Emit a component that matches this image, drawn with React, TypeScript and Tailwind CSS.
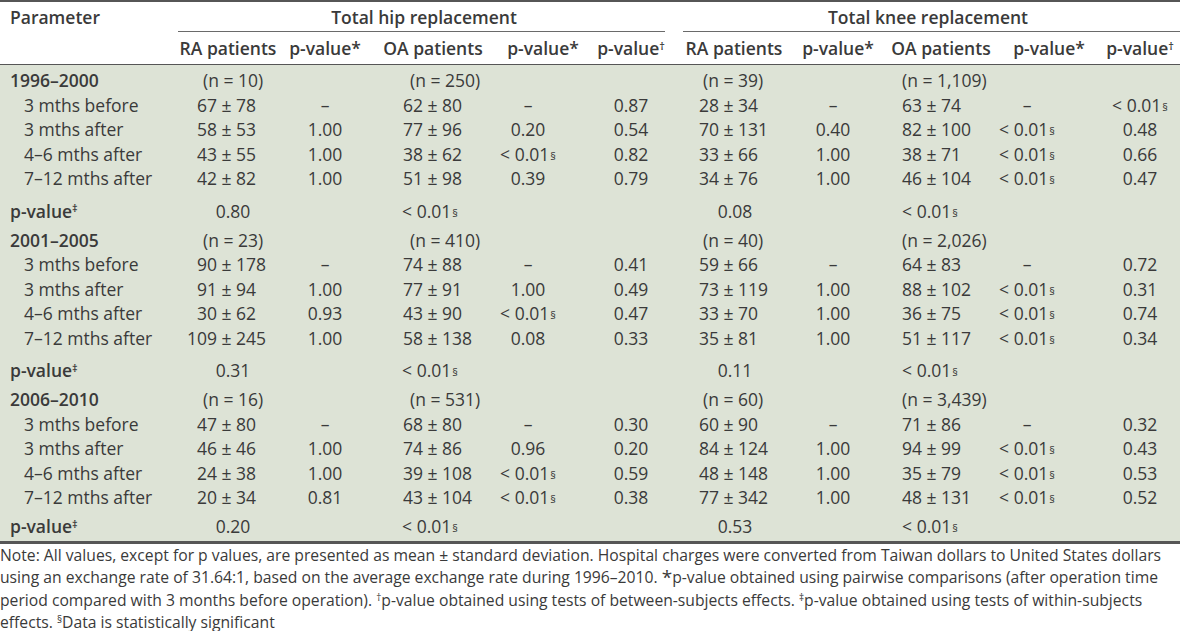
import React from 'react';

type Cell = string | null;

const sections = [
    {
        period: '1996–2000',
        n: ['(n = 10)', '(n = 250)', '(n = 39)', '(n = 1,109)'],
        rows: [
            ['3 mths before', '67 ± 78', '–', '62 ± 80', '–', '0.87', '28 ± 34', '–', '63 ± 74', '–', '< 0.01§'],
            ['3 mths after', '58 ± 53', '1.00', '77 ± 96', '0.20', '0.54', '70 ± 131', '0.40', '82 ± 100', '< 0.01§', '0.48'],
            ['4–6 mths after', '43 ± 55', '1.00', '38 ± 62', '< 0.01§', '0.82', '33 ± 66', '1.00', '38 ± 71', '< 0.01§', '0.66'],
            ['7–12 mths after', '42 ± 82', '1.00', '51 ± 98', '0.39', '0.79', '34 ± 76', '1.00', '46 ± 104', '< 0.01§', '0.47'],
        ],
        p: ['0.80', '< 0.01§', '0.08', '< 0.01§'],
    },
    {
        period: '2001–2005',
        n: ['(n = 23)', '(n = 410)', '(n = 40)', '(n = 2,026)'],
        rows: [
            ['3 mths before', '90 ± 178', '–', '74 ± 88', '–', '0.41', '59 ± 66', '–', '64 ± 83', '–', '0.72'],
            ['3 mths after', '91 ± 94', '1.00', '77 ± 91', '1.00', '0.49', '73 ± 119', '1.00', '88 ± 102', '< 0.01§', '0.31'],
            ['4–6 mths after', '30 ± 62', '0.93', '43 ± 90', '< 0.01§', '0.47', '33 ± 70', '1.00', '36 ± 75', '< 0.01§', '0.74'],
            ['7–12 mths after', '109 ± 245', '1.00', '58 ± 138', '0.08', '0.33', '35 ± 81', '1.00', '51 ± 117', '< 0.01§', '0.34'],
        ],
        p: ['0.31', '< 0.01§', '0.11', '< 0.01§'],
    },
    {
        period: '2006–2010',
        n: ['(n = 16)', '(n = 531)', '(n = 60)', '(n = 3,439)'],
        rows: [
            ['3 mths before', '47 ± 80', '–', '68 ± 80', '–', '0.30', '60 ± 90', '–', '71 ± 86', '–', '0.32'],
            ['3 mths after', '46 ± 46', '1.00', '74 ± 86', '0.96', '0.20', '84 ± 124', '1.00', '94 ± 99', '< 0.01§', '0.43'],
            ['4–6 mths after', '24 ± 38', '1.00', '39 ± 108', '< 0.01§', '0.59', '48 ± 148', '1.00', '35 ± 79', '< 0.01§', '0.53'],
            ['7–12 mths after', '20 ± 34', '0.81', '43 ± 104', '< 0.01§', '0.38', '77 ± 342', '1.00', '48 ± 131', '< 0.01§', '0.52'],
        ],
        p: ['0.20', '< 0.01§', '0.53', '< 0.01§'],
    },
];

const bodyGrid = 'grid grid-cols-[172px_112px_82px_114px_96px_110px_104px_86px_102px_98px_104px]';
const headGrid = 'grid grid-cols-[172px_112px_82px_134px_86px_90px_116px_92px_114px_102px_80px]';

// mean box widths for the four "mean ± sd" columns, so the ± lines up
const meanBox = ['w-[45px]', 'w-[57px]', 'w-[33px]', 'w-[46px]'];
const nPad = ['pl-[31px]', 'pl-[44px]', 'pl-[17px]', 'pl-[26px]'];
const pShift = ['pl-[10px]', 'pl-[14px]', 'pr-[6px]', 'pl-[6px]'];

const Val = ({ v }: { v: Cell }) => {
    if (!v) return null;
    if (v.endsWith('§')) {
        return (
            <>
                {v.slice(0, -1)}
                <sup className="text-[11px] relative -top-[1px] ml-[1px]">§</sup>
            </>
        );
    }
    return <>{v}</>;
};

const MeanSd = ({ v, box }: { v: string; box: string }) => {
    const [m, sd] = v.split(' ± ');
    return (
        <div className="flex whitespace-pre">
            <span className={`inline-block text-right ${box}`}>{m}</span>
            <span>{' ± ' + sd}</span>
        </div>
    );
};

const PCell = ({ v, extra = '' }: { v: Cell; extra?: string }) => (
    <div className={`text-center whitespace-pre ${extra}`}>
        <Val v={v} />
    </div>
);

const App: React.FC = () => {
    return (
        <div className="w-[1180px] h-[631px] overflow-hidden bg-white text-[#3a3a3a] font-['Open_Sans',sans-serif] text-[17.5px] leading-[24px]">
            <div className="border-t-2 border-[#565656] whitespace-nowrap">
                {/* header row 1 */}
                <div className={`${headGrid} h-[30px] items-center font-semibold`}>
                    <div className="pl-[10px]">Parameter</div>
                    <div className="col-span-5 h-full flex flex-col">
                        <div className="flex-1 flex items-center justify-center">Total hip replacement</div>
                        <div className="ml-[6px] mr-[11px] border-b border-[#6a6a6a]" />
                    </div>
                    <div className="col-span-5 h-full flex flex-col">
                        <div className="flex-1 flex items-center justify-center">Total knee replacement</div>
                        <div className="ml-[7px] border-b border-[#6a6a6a]" />
                    </div>
                </div>
                {/* header row 2 */}
                <div className={`${headGrid} h-[33px] items-center font-semibold border-b-[1.5px] border-[#565656]`}>
                    <div />
                    <div className="text-center">RA patients</div>
                    <div className="text-center">p-value*</div>
                    <div className="text-center">OA patients</div>
                    <div className="text-center">p-value*</div>
                    <div className="text-center">p-value<sup className="text-[11px]">†</sup></div>
                    <div className="text-center">RA patients</div>
                    <div className="text-center">p-value*</div>
                    <div className="text-center">OA patients</div>
                    <div className="text-center">p-value*</div>
                    <div className="text-center">p-value<sup className="text-[11px]">†</sup></div>
                </div>
            </div>

            {/* body */}
            <div className="bg-[#dde3d6] pt-[3px] border-b-[3px] border-[#565656] whitespace-nowrap">
                {sections.map((s, si) => (
                    <div key={si}>
                        <div className={`${bodyGrid} h-[24.5px] items-center`}>
                            <div className="pl-[10px] font-semibold">{s.period}</div>
                            <div className={nPad[0]}>{s.n[0]}</div>
                            <div />
                            <div className={nPad[1]}>{s.n[1]}</div>
                            <div />
                            <div />
                            <div className={nPad[2]}>{s.n[2]}</div>
                            <div />
                            <div className={nPad[3]}>{s.n[3]}</div>
                            <div />
                            <div />
                        </div>
                        {s.rows.map((r, ri) => (
                            <div key={ri} className={`${bodyGrid} h-[24.5px] items-center`}>
                                <div className="pl-[24px]">{r[0]}</div>
                                <MeanSd v={r[1]} box={meanBox[0]} />
                                <PCell v={r[2]} />
                                <MeanSd v={r[3]} box={meanBox[1]} />
                                <PCell v={r[4]} />
                                <PCell v={r[5]} />
                                <MeanSd v={r[6]} box={meanBox[2]} />
                                <PCell v={r[7]} />
                                <MeanSd v={r[8]} box={meanBox[3]} />
                                <PCell v={r[9]} />
                                <PCell v={r[10]} extra="pl-[24px]" />
                            </div>
                        ))}
                        <div className={`${bodyGrid} ${si === 2 ? 'h-[31px] pt-[2px]' : 'h-[37px] pt-[3px]'} items-center`}>
                            <div className="pl-[10px] font-semibold">
                                p-value<sup className="text-[11px]">‡</sup>
                            </div>
                            <PCell v={s.p[0]} extra={pShift[0]} />
                            <div />
                            <PCell v={s.p[1]} extra={pShift[1]} />
                            <div />
                            <div />
                            <PCell v={s.p[2]} extra={pShift[2]} />
                            <div />
                            <PCell v={s.p[3]} extra={pShift[3]} />
                            <div />
                            <div />
                        </div>
                    </div>
                ))}
            </div>

            {/* footnote */}
            <div className="text-[15.7px] leading-[22.6px] text-[#3a3a3a] whitespace-nowrap">
                <div>Note: All values, except for p values, are presented as mean ± standard deviation. Hospital charges were converted from Taiwan dollars to United States dollars</div>
                <div>
                    using an exchange rate of 31.64:1, based on the average exchange rate during 1996–2010. <span className="text-[19px] leading-none relative top-[1px]">*</span>p-value obtained using pairwise comparisons (after operation time
                </div>
                <div>
                    period compared with 3 months before operation). <sup className="text-[10px]">†</sup>p-value obtained using tests of between-subjects effects. <sup className="text-[10px]">‡</sup>p-value obtained using tests of within-subjects
                </div>
                <div>
                    effects. <sup className="text-[10px]">§</sup>Data is statistically significant
                </div>
            </div>
        </div>
    );
};

export default App;
